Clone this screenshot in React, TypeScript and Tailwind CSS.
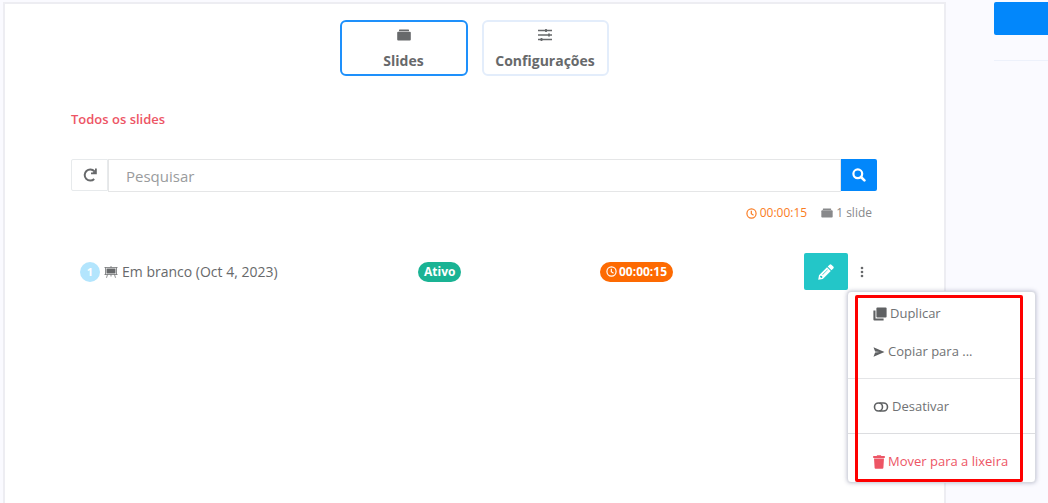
import { useState } from "react"
import type { ReactNode } from "react"
import clsx from "clsx"

interface IconProps {
  className?: string
}

function SlidesIcon({ className }: IconProps) {
  return (
    <svg viewBox="0 0 14 12" fill="currentColor" className={className} aria-hidden="true">
      <rect x="2" y="0.5" width="10" height="1.8" rx="0.6" />
      <rect x="0.2" y="2.8" width="13.6" height="8.7" rx="1" />
    </svg>
  )
}

function SlidersIcon({ className }: IconProps) {
  return (
    <svg
      viewBox="0 0 14 12"
      fill="none"
      stroke="currentColor"
      strokeWidth="1.4"
      className={className}
      aria-hidden="true"
    >
      <path d="M0 1.5h14M0 6h14M0 10.5h14" />
      <path d="M8 0v3M11 4.5v3M3.5 9v3" strokeWidth="1.8" />
    </svg>
  )
}

function ReloadIcon({ className }: IconProps) {
  return (
    <svg
      viewBox="0 0 14 14"
      fill="none"
      stroke="currentColor"
      strokeWidth="2"
      className={className}
      aria-hidden="true"
    >
      <path d="M11.2 11A5.6 5.6 0 1 1 11.4 3.2" />
      <path d="M8 5.4h4.9V0.6" strokeWidth="1.8" />
      <path d="M9 5.4 12.8 1.6v3.8z" fill="currentColor" stroke="none" />
    </svg>
  )
}

function SearchIcon({ className }: IconProps) {
  return (
    <svg
      viewBox="0 0 14 14"
      fill="none"
      stroke="currentColor"
      strokeWidth="2.2"
      className={className}
      aria-hidden="true"
    >
      <circle cx="5.8" cy="5.8" r="4.4" />
      <path d="m9 9 3.4 3.4" strokeWidth="2.6" strokeLinecap="round" />
    </svg>
  )
}

function ClockIcon({ className }: IconProps) {
  return (
    <svg
      viewBox="0 0 12 12"
      fill="none"
      stroke="currentColor"
      strokeWidth="1.3"
      className={className}
      aria-hidden="true"
    >
      <circle cx="6" cy="6" r="5" />
      <path d="M5.8 3v3.3l2.4 1.5" />
    </svg>
  )
}

function BoardIcon({ className }: IconProps) {
  return (
    <svg viewBox="0 0 14 12" fill="none" stroke="currentColor" className={className} aria-hidden="true">
      <g strokeOpacity="0.75">
        <path d="M0.5 1.5h13M0.5 8.5h13M1.5 1.5v7M12.5 1.5v7M7 0v1.5" />
        <path d="M3.5 8.5 2.5 11.8M10.5 8.5l1 3.3M7 8.5v2" />
      </g>
      <rect x="3" y="3" width="8" height="4" fill="currentColor" />
    </svg>
  )
}

function PencilIcon({ className }: IconProps) {
  return (
    <svg viewBox="0 0 16 16" fill="currentColor" className={className} aria-hidden="true">
      <path
        fillRule="evenodd"
        d="M0.2 15.8 1 11.2 9 3.2 12.8 7 4.8 15ZM1.9 12.8l1.3 1.3 1.1-.4-.2-1.6-1.7-.3ZM4.3 10.6l.4.4 5.2-5.2-.4-.4Z"
      />
      <path d="M9.7 2.5 11.6.7q.9-.9 1.8 0l1.9 1.9q.9.9 0 1.8l-1.8 1.9Z" />
    </svg>
  )
}

function DotsIcon({ className }: IconProps) {
  return (
    <svg viewBox="0 0 4 12" fill="currentColor" className={className} aria-hidden="true">
      <circle cx="2" cy="2" r="1.3" />
      <circle cx="2" cy="6" r="1.3" />
      <circle cx="2" cy="10" r="1.3" />
    </svg>
  )
}

function DuplicateIcon({ className }: IconProps) {
  return (
    <svg viewBox="0 0 14 14" fill="currentColor" className={className} aria-hidden="true">
      <rect x="3.4" y="0.4" width="10.2" height="10.2" rx="1" />
      <path d="M0.4 3.4h2.1v8.1h8.1v2.1H1.4a1 1 0 0 1-1-1z" />
    </svg>
  )
}

function SendIcon({ className }: IconProps) {
  return (
    <svg viewBox="0 0 11 10" fill="currentColor" className={className} aria-hidden="true">
      <path d="M0 0.3 11 5 0 9.7 1.6 5.6 6.2 5 1.6 4.4Z" />
    </svg>
  )
}

function ToggleIcon({ className }: IconProps) {
  return (
    <svg
      viewBox="0 0 15 10"
      fill="none"
      stroke="currentColor"
      strokeWidth="1.6"
      className={className}
      aria-hidden="true"
    >
      <circle cx="5" cy="5" r="4" />
      <path d="M6 1h4a4 4 0 0 1 0 8H6" />
    </svg>
  )
}

function TrashIcon({ className }: IconProps) {
  return (
    <svg viewBox="0 0 12 14" fill="currentColor" className={className} aria-hidden="true">
      <path d="M0.2 1.1h3.4L4.2.2h3.6l.6.9h3.4v1.8H0.2Z" />
      <path d="M1 3.5h10l-.6 9.2q-.1 1-1 1H2.6q-.9 0-1-1Z" />
    </svg>
  )
}

interface TabButtonProps {
  active: boolean
  icon: ReactNode
  label: string
  className?: string
  onClick: () => void
}

function TabButton({ active, icon, label, className, onClick }: TabButtonProps) {
  return (
    <button
      type="button"
      aria-pressed={active}
      onClick={onClick}
      className={clsx(
        "flex h-14 flex-col items-center justify-between rounded-md border-2 bg-white px-2 pt-[7px] pb-[3px] text-sm font-bold",
        active ? "border-[#1e90fb]" : "border-[#e3edfb]",
        className,
      )}
    >
      {icon}
      {label}
    </button>
  )
}

interface MenuItemProps {
  icon: ReactNode
  label: string
  danger?: boolean
}

function MenuItem({ icon, label, danger }: MenuItemProps) {
  return (
    <button
      type="button"
      role="menuitem"
      className={clsx(
        "flex h-[38px] w-full items-center gap-[3px] pl-[25px] text-[13px] whitespace-nowrap",
        danger ? "text-[#ed5565]" : "text-[#707274]",
      )}
    >
      {icon}
      {label}
    </button>
  )
}

function SlideMenu() {
  return (
    <div
      role="menu"
      className="absolute top-[38px] -left-px z-10 w-[189px] rounded-sm border border-[#d8dae2] bg-white pt-[3px] pb-px shadow-[0_0_4px_rgba(90,95,130,0.4)]"
    >
      <MenuItem icon={<DuplicateIcon className="size-3.5 text-[#5f6163]" />} label="Duplicar" />
      <MenuItem icon={<SendIcon className="h-2.5 w-3 text-[#5f6163]" />} label="Copiar para ..." />
      <hr className="mt-[7px] mb-[9px] border-[#e4e5e7]" />
      <MenuItem icon={<ToggleIcon className="h-2.5 w-4 text-[#5f6163]" />} label="Desativar" />
      <hr className="mt-[7px] mb-[9px] border-[#dcdde0]" />
      <MenuItem danger icon={<TrashIcon className="h-3.5 w-3" />} label="Mover para a lixeira" />
      <div className="pointer-events-none absolute top-[3px] right-3 bottom-0 left-[7px] rounded-xs border-3 border-[#fe0000]" />
    </div>
  )
}

export default function App() {
  const [tab, setTab] = useState("slides")
  const [menuOpen, setMenuOpen] = useState(true)

  return (
    <div className="flex min-h-screen overflow-hidden bg-[#fafaff] pt-0.5 pl-[3px] font-['Open_Sans',sans-serif] text-[#67696b]">
      <main className="min-w-0 flex-1 border-2 border-b-0 border-[#ededf2] bg-white pr-[67px] pl-[66px]">
        <nav className="flex justify-center gap-3.5 pt-4">
          <TabButton
            active={tab === "slides"}
            icon={<SlidesIcon className="h-3 w-3.5" />}
            label="Slides"
            className="w-32"
            onClick={() => setTab("slides")}
          />
          <TabButton
            active={tab === "config"}
            icon={<SlidersIcon className="h-3 w-3.5" />}
            label="Configurações"
            className="w-[127px]"
            onClick={() => setTab("config")}
          />
        </nav>

        <h1 className="mt-[33px] text-[13px] leading-5 font-semibold text-[#ed5565]">Todos os slides</h1>

        <form className="mt-[30px] flex" onSubmit={(e) => e.preventDefault()}>
          <button
            type="button"
            aria-label="Atualizar"
            className="flex h-8 w-[37px] items-center justify-center rounded-l-xs border border-[#e7eaec]"
          >
            <ReloadIcon className="size-3.5" />
          </button>
          <input
            type="text"
            aria-label="Pesquisar"
            placeholder="Pesquisar"
            className="h-[33px] min-w-0 flex-1 border border-[#e5e6e7] px-[17px] text-[15px] placeholder:text-[#999b9d] focus:outline-none"
          />
          <button
            type="submit"
            aria-label="Buscar"
            className="flex h-8 w-9 items-center justify-center rounded-r-xs bg-[#0287fb] text-white"
          >
            <SearchIcon className="size-3.5" />
          </button>
        </form>

        <div className="mt-[11px] flex items-center justify-end gap-3.5 pr-[5px] text-xs leading-5">
          <span className="flex items-center gap-[3px] text-[#fa7c22]">
            <ClockIcon className="size-[11px]" />
            00:00:15
          </span>
          <span className="flex items-center gap-[3px] text-[#88898b]">
            <SlidesIcon className="h-2.5 w-3" />1 slide
          </span>
        </div>

        <ul className="mt-[30px]">
          <li className="grid grid-cols-[338fr_182fr_204fr_73px] items-center pl-[9px]">
            <div className="flex items-center gap-1 text-sm">
              <span className="flex size-5 items-center justify-center rounded-full bg-[#b3e5fd] text-[11px] font-bold text-white">
                1
              </span>
              <BoardIcon className="h-3 w-3.5" />
              Em branco (Oct 4, 2023)
            </div>
            <div className="flex">
              <span className="flex h-5 items-center rounded-full bg-[#1ab394] px-1.5 text-xs font-bold text-white">
                Ativo
              </span>
            </div>
            <div className="flex">
              <span className="flex h-5 items-center gap-0.5 rounded-full bg-[#fd6a02] px-1.5 text-xs font-bold text-white">
                <ClockIcon className="size-[11px]" />
                00:00:15
              </span>
            </div>
            <div className="flex">
              <button
                type="button"
                aria-label="Editar"
                className="flex h-[37px] w-11 items-center justify-center rounded-xs bg-[#23c6c8] text-white"
              >
                <PencilIcon className="size-4" />
              </button>
              <div className="relative flex flex-1">
                <button
                  type="button"
                  aria-label="Mais opções"
                  aria-expanded={menuOpen}
                  onClick={() => setMenuOpen(!menuOpen)}
                  className="flex flex-1 items-center justify-center pr-0.5"
                >
                  <DotsIcon className="h-3 w-1" />
                </button>
                {menuOpen && <SlideMenu />}
              </div>
            </div>
          </li>
        </ul>
      </main>

      <aside className="w-[102px] pl-12">
        <button type="button" aria-label="Salvar" className="block h-[33px] w-full rounded-l-xs bg-[#0287fb]" />
        <hr className="mt-[25px] border-[#edf1fb]" />
      </aside>
    </div>
  )
}
